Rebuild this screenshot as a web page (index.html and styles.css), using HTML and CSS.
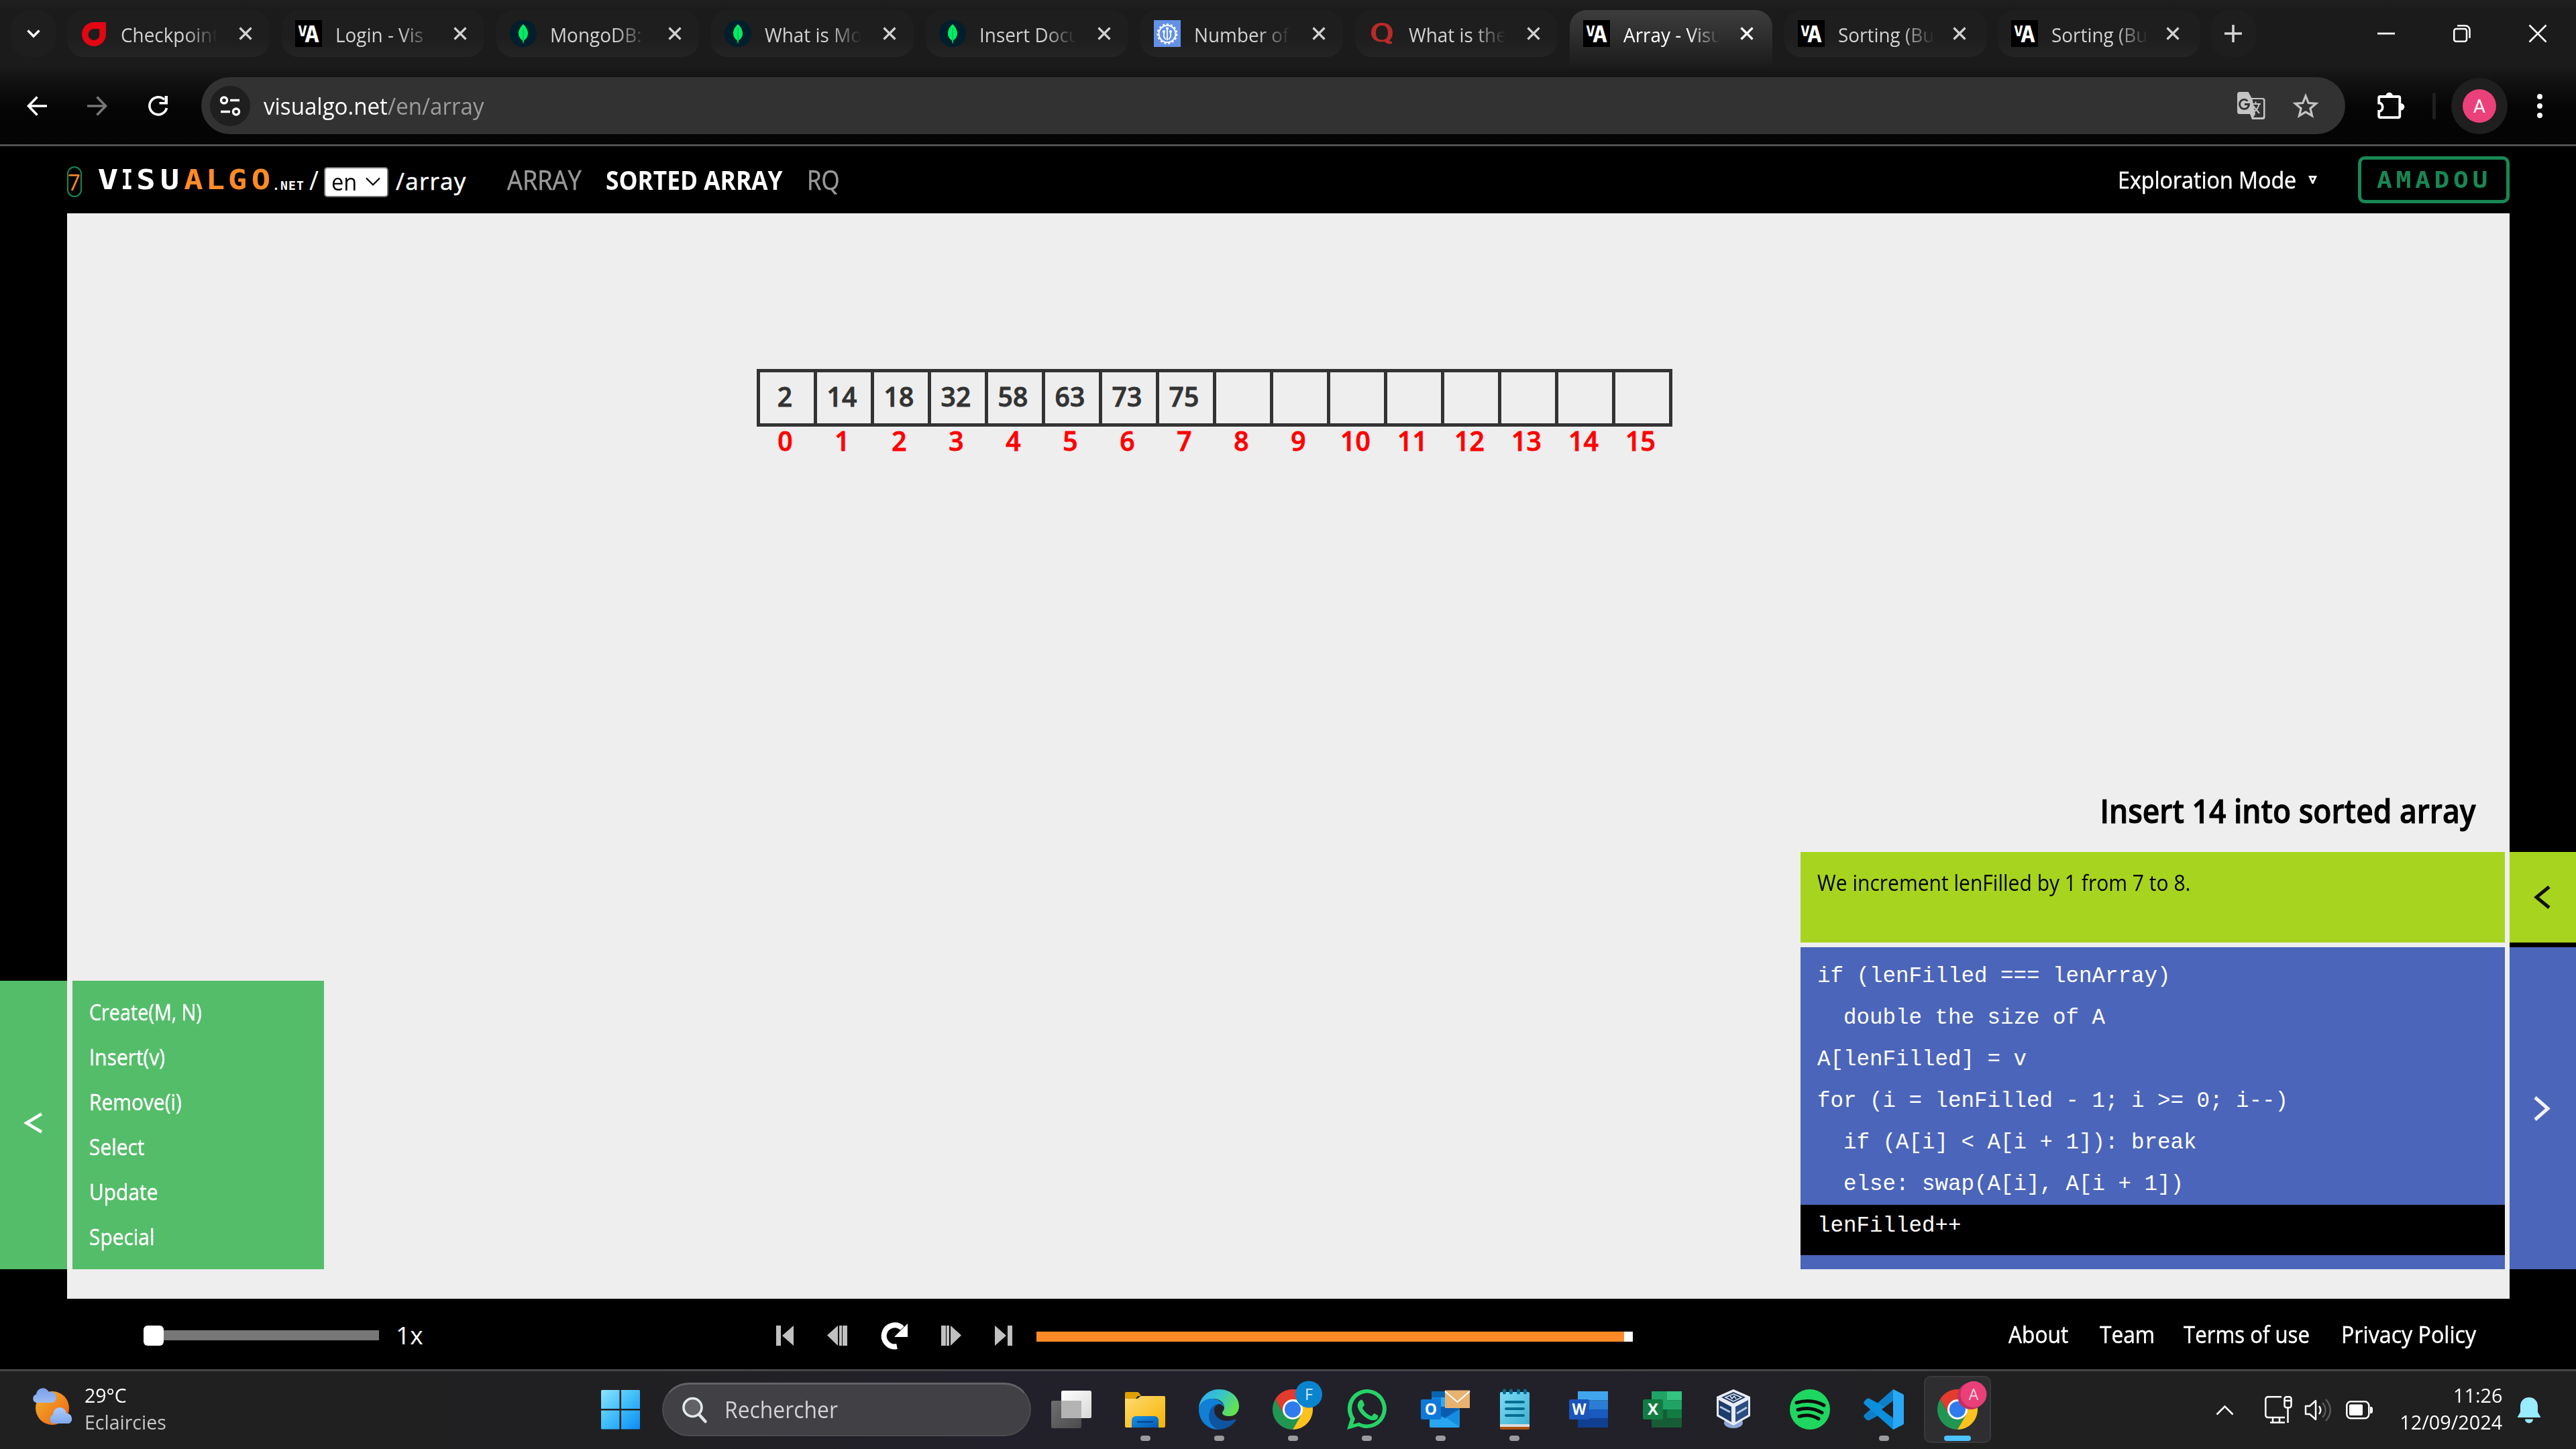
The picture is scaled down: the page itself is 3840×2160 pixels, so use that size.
FILE: index.html
```html
<!DOCTYPE html>
<html lang="en">
<head>
<meta charset="utf-8">
<title>Array - VisuAlgo</title>
<link rel="stylesheet" href="styles.css">
</head>
<body>
<svg class="defs" width="0" height="0">
  <defs>
    <linearGradient id="win" x1="0" y1="0" x2="1" y2="1"><stop offset="0" stop-color="#8ee2fd"/><stop offset=".5" stop-color="#3fbdf9"/><stop offset="1" stop-color="#0a8cf5"/></linearGradient>
    <linearGradient id="sun" x1="0" y1="0" x2="1" y2="1"><stop offset="0" stop-color="#f2b530"/><stop offset="1" stop-color="#ee5f10"/></linearGradient>
    <linearGradient id="cloud" x1="0" y1="0" x2="0" y2="1"><stop offset="0" stop-color="#7aa0e8"/><stop offset=".6" stop-color="#a9c8fa"/><stop offset="1" stop-color="#7ea8ee"/></linearGradient>
    <linearGradient id="folder" x1="0" y1="0" x2="1" y2="1"><stop offset="0" stop-color="#ffdc73"/><stop offset="1" stop-color="#f7b100"/></linearGradient>
    <linearGradient id="azure" x1="0" y1="0" x2="1" y2="1"><stop offset="0" stop-color="#1792e4"/><stop offset="1" stop-color="#0759b4"/></linearGradient>
    <linearGradient id="edgetop" x1="0" y1="0" x2="1" y2=".5"><stop offset="0" stop-color="#2fa9f0"/><stop offset=".5" stop-color="#35c4cf"/><stop offset="1" stop-color="#62e052"/></linearGradient>
    <linearGradient id="pad" x1="0" y1="0" x2="1" y2="1"><stop offset="0" stop-color="#7edcf6"/><stop offset="1" stop-color="#3fb0d2"/></linearGradient>
    <linearGradient id="sheet" x1="0" y1="0" x2="1" y2="1"><stop offset="0" stop-color="#ffffff"/><stop offset="1" stop-color="#d8d8d8"/></linearGradient>
    <linearGradient id="sheet2" x1="0" y1="0" x2="1" y2="1"><stop offset="0" stop-color="#6f6f72"/><stop offset="1" stop-color="#4b4b4d"/></linearGradient>
    <symbol id="leaf" viewBox="0 0 40 40"><circle cx="20" cy="20" r="20" fill="#001e2b"/><path d="M20 6c-5 5-7 9-7 14 0 5 3 8 6 10.500l.500 4h1l.500-4c3-2.500 6-5.500 6-10.500 0-5-2-9-7-14z" fill="#00ed64"/><path d="M20.200 12v19" stroke="#00a84a" stroke-width="1"/></symbol>
    <symbol id="va" viewBox="0 0 40 40"><rect width="40" height="40" fill="#000"/><text x="4" y="24" font-family="DejaVu Sans Mono" font-weight="700" font-size="22" textLength="14" lengthAdjust="spacingAndGlyphs" fill="#fff">V</text><text x="14" y="33" font-family="DejaVu Sans Mono" font-weight="700" font-size="34" textLength="22" lengthAdjust="spacingAndGlyphs" fill="#fff">A</text></symbol>
    <symbol id="x" viewBox="0 0 20 20"><path d="M1.500 1.500l17 17M18.500 1.500l-17 17" stroke="currentColor" stroke-width="3.200"/></symbol>
    <symbol id="chrome" viewBox="0 0 60 60"><path d="M4 15A30 30 0 0 1 56 15H30L17 37.500z" fill="#e33b2e"/><path d="M4 15A30 30 0 0 0 30 60L43 37.500H17z" fill="#219653"/><path d="M56 15A30 30 0 0 1 30 60L43 37.500 30 15z" fill="#fcc31e"/><circle cx="30" cy="30" r="15" fill="#fff"/><circle cx="30" cy="30" r="12" fill="#2f7bee"/></symbol>
  </defs>
</svg>

<div class="browser">
  <div class="tabstrip">
    <div class="tab-search"><svg width="22" height="14" viewBox="0 0 22 14"><path d="M2.500 2.500l8.500 8.500 8.500-8.500" fill="none" stroke="#fff" stroke-width="3.500"/></svg></div>
    <div class="tab"><svg class="fav" viewBox="0 0 40 40"><path fill-rule="evenodd" d="M38 3v17a18 18 0 1 1-18-17zM28 13h-8a8.500 8.500 0 1 0 8.500 8.500z" fill="#e30613"/></svg><div class="label"><span>Checkpoint</span></div><svg class="close"><use href="#x"/></svg></div>
    <div class="tab"><svg class="fav"><use href="#va"/></svg><div class="label"><span>Login - Vis</span></div><svg class="close"><use href="#x"/></svg></div>
    <div class="tab"><svg class="fav"><use href="#leaf"/></svg><div class="label"><span>MongoDB:</span></div><svg class="close"><use href="#x"/></svg></div>
    <div class="tab"><svg class="fav"><use href="#leaf"/></svg><div class="label"><span>What is Mo</span></div><svg class="close"><use href="#x"/></svg></div>
    <div class="tab"><svg class="fav"><use href="#leaf"/></svg><div class="label"><span>Insert Docu</span></div><svg class="close"><use href="#x"/></svg></div>
    <div class="tab"><svg class="fav" viewBox="0 0 40 40"><rect width="40" height="40" fill="#6391e6"/><circle cx="20" cy="20.500" r="12.500" fill="none" stroke="#fff" stroke-width="2"/><circle cx="20" cy="20.500" r="14.300" fill="none" stroke="#fff" stroke-width="2.400" stroke-dasharray="3 3"/><path d="M20 12v18M15 17v8l3 4M25 17v8l-3 4" stroke="#fff" stroke-width="1.800" fill="none"/><circle cx="20" cy="12.500" r="2" fill="#fff"/><circle cx="15" cy="17" r="2" fill="#fff"/><circle cx="25" cy="17" r="2" fill="#fff"/></svg><div class="label"><span>Number of</span></div><svg class="close"><use href="#x"/></svg></div>
    <div class="tab"><svg class="fav" viewBox="0 0 40 40"><path fill-rule="evenodd" d="M20 4c10 0 16 6 16 15 0 5-2 9-5 11.500 1 1.500 2 1.500 4 1.500v3c-5 1-9 0-11-3-12 2-20-4-20-13 0-9 6-15 16-15zM20 8c-6 0-9 4-9 11s3 10.500 9 10.500 9-4 9-10.500-3-11-9-11z" fill="#b92b27"/></svg><div class="label"><span>What is the</span></div><svg class="close"><use href="#x"/></svg></div>
    <div class="tab active"><svg class="fav"><use href="#va"/></svg><div class="label"><span>Array - Visu</span></div><svg class="close"><use href="#x"/></svg></div>
    <div class="tab after"><svg class="fav"><use href="#va"/></svg><div class="label"><span>Sorting (Bu</span></div><svg class="close"><use href="#x"/></svg></div>
    <div class="tab last"><svg class="fav"><use href="#va"/></svg><div class="label"><span>Sorting (Bu</span></div><svg class="close"><use href="#x"/></svg></div>
    <div class="new-tab"><svg width="26" height="26" viewBox="0 0 26 26"><path d="M13 0v26M0 13h26" stroke="#d6d6d6" stroke-width="3.500"/></svg></div>
    <div class="window-buttons">
      <svg width="26" height="26" viewBox="0 0 26 26"><path d="M0 13h26" stroke="#fff" stroke-width="2.800"/></svg>
      <svg width="26" height="26" viewBox="0 0 26 26"><rect x="1.250" y="6" width="18.750" height="18.750" rx="3" fill="none" stroke="#fff" stroke-width="2.500"/><path d="M6 1.250h12a6.500 6.500 0 0 1 6.500 6.500v12" fill="none" stroke="#fff" stroke-width="2.500"/></svg>
      <svg width="26" height="26" viewBox="0 0 26 26"><path d="M.500.500l25 25M25.500.500l-25 25" stroke="#fff" stroke-width="2.500"/></svg>
    </div>
  </div>
  <div class="toolbar">
    <div class="nav-buttons">
      <svg width="30" height="30" viewBox="0 0 30 30"><path d="M30 15H3M15.500 1.500L2.500 15l13 13.500" fill="none" stroke="#fff" stroke-width="3.600"/></svg>
      <svg width="30" height="30" viewBox="0 0 30 30"><path d="M0 15h27M14.500 1.500l13 13.500-13 13.500" fill="none" stroke="#777" stroke-width="3.600"/></svg>
      <svg width="32" height="30" viewBox="0 0 32 30"><path d="M25 5.500a13 13 0 1 0 3.500 12.500" fill="none" stroke="#fff" stroke-width="3.600"/><path d="M30 0v12.500H17.500v-3.600h8V0z" fill="#fff"/></svg>
    </div>
    <div class="omnibox">
      <div class="site-info"><svg width="32" height="30" viewBox="0 0 32 30" fill="none" stroke="#fff" stroke-width="3.400"><circle cx="7" cy="6.500" r="4.500"/><path d="M16 6.500h14M2 23.500h14"/><circle cx="25" cy="23.500" r="4.500"/></svg></div>
      <div class="url"><span>visualgo.net</span><span class="dim">/en/array</span></div>
      <svg class="translate" width="42" height="42" viewBox="0 0 42 42"><path d="M3.500 0h13l5 9H38a3.500 3.500 0 0 1 3.500 3.500V37.500A3.500 3.500 0 0 1 38 41H22l-3-8H3.500A3.500 3.500 0 0 1 0 29.500v-26A3.500 3.500 0 0 1 3.500 0z" fill="#c4c4c4"/><path d="M22.500 11H37a2 2 0 0 1 2 2v23a2 2 0 0 1-2 2H24l3-5z" fill="#323232"/><path d="M22 18h13M27.500 14.500V18M24 21l9 11M32.500 18c-1 6-4 9.500-8 12" stroke="#c4c4c4" stroke-width="2" fill="none"/><path d="M15.500 13.500A7 7 0 1 0 17.500 18.500h-6.500" fill="none" stroke="#323232" stroke-width="2.800"/></svg>
      <svg width="40" height="37" viewBox="0 0 40 37"><path d="M20 4l4.200 10.500 11.300.900-8.600 7.300 2.700 11L20 27.800l-9.600 5.900 2.700-11L4.500 15.400l11.300-.900z" fill="none" stroke="#c4c4c4" stroke-width="3.200"/></svg>
    </div>
    <svg class="puzzle" width="41" height="41" viewBox="0 0 41 41"><path d="M4 7h27.500a1.800 1.800 0 0 1 1.800 1.800v27.500a1.800 1.800 0 0 1-1.800 1.800H4a1.800 1.800 0 0 1-1.800-1.800V29c3 0 5.500-2.500 5.500-6.500S5 16.500 2.200 16.500V8.800A1.800 1.800 0 0 1 4 7z" fill="none" stroke="#fff" stroke-width="3.800"/><path d="M12.500 6a5.200 5.200 0 0 1 10.400 0zM35 17a5.300 5.300 0 0 1 0 10.600z" fill="#fff"/></svg>
    <div class="separator"></div>
    <div class="profile"><div class="avatar">A</div></div>
    <svg class="kebab" width="8" height="36" viewBox="0 0 8 36" fill="#fff"><circle cx="4" cy="4" r="4"/><circle cx="4" cy="18" r="4"/><circle cx="4" cy="32" r="4"/></svg>
  </div>
</div>

<header class="site-header">
  <div class="seven">7</div>
  <div class="logo"><i class="v">V</i><i class="i">I</i><i class="s">S</i><i class="u">U</i><i class="a">A</i><i class="l">L</i><i class="g">G</i><i class="o">O</i></div>
  <div class="net">.NET</div>
  <div class="slash">/</div>
  <div class="lang"><span>en</span><svg width="22" height="13" viewBox="0 0 22 13"><path d="M1 1.500l10 10 10-10" fill="none" stroke="#000" stroke-width="2.200"/></svg></div>
  <div class="path">/array</div>
  <nav class="modes"><a class="m1"><span>ARRAY</span></a><a class="m2"><span>SORTED ARRAY</span></a><a class="m3"><span>RQ</span></a></nav>
  <div class="exploration"><span>Exploration Mode</span></div>
  <svg class="caret" width="13" height="12" viewBox="0 0 13 12"><path fill-rule="evenodd" d="M0 0h13L7.500 12h-2zM4.300 3l2.200 4.500L8.700 3z" fill="#fff"/></svg>
  <div class="user"><span>AMADOU</span></div>
</header>

<main class="app">
  <div class="edge left"><div class="handle green"><svg width="28" height="32" viewBox="0 0 28 32"><path d="M26 2.500L3.500 16 26 29.500" fill="none" stroke="#fff" stroke-width="4.600"/></svg></div></div>
  <section class="stage">
    <div class="array">
      <div class="cells"><b>2</b><b>14</b><b>18</b><b>32</b><b>58</b><b>63</b><b>73</b><b>75</b><b></b><b></b><b></b><b></b><b></b><b></b><b></b><b></b></div>
      <div class="indices"><b>0</b><b>1</b><b>2</b><b>3</b><b>4</b><b>5</b><b>6</b><b>7</b><b>8</b><b>9</b><b>10</b><b>11</b><b>12</b><b>13</b><b>14</b><b>15</b></div>
    </div>
    <div class="panels">
      <ul class="actions"><li><span class="create">Create(M, N)</span></li><li><span>Insert(v)</span></li><li><span>Remove(i)</span></li><li><span>Select</span></li><li><span>Update</span></li><li><span>Special</span></li></ul>
      <div class="trace">
        <h1><span>Insert 14 into sorted array</span></h1>
        <div class="status"><span>We increment lenFilled by 1 from 7 to 8.</span></div>
        <div class="code"><p>if (lenFilled === lenArray)</p><p>  double the size of A</p><p>A[lenFilled] = v</p><p>for (i = lenFilled - 1; i &gt;= 0; i--)</p><p>  if (A[i] &lt; A[i + 1]): break</p><p>  else: swap(A[i], A[i + 1])</p><p class="current">lenFilled++</p></div>
      </div>
    </div>
  </section>
  <div class="edge right">
    <div class="handle lime"><svg width="25" height="35" viewBox="0 0 25 35"><path d="M23 2L4 17.500 23 33" fill="none" stroke="#111" stroke-width="5"/></svg></div>
    <div class="handle blue"><svg width="25" height="37" viewBox="0 0 25 37"><path d="M2 2l19 16.500L2 35" fill="none" stroke="#f4f4f8" stroke-width="5"/></svg></div>
  </div>
</main>

<footer class="player">
  <div class="slider"><div class="thumb"></div></div>
  <div class="speed">1x</div>
  <div class="controls">
    <svg class="c1" width="26" height="30" viewBox="0 0 26 30"><path d="M0 0h7v30H0zM26 0v30L9 15z" fill="#c0c0c0"/></svg>
    <svg class="c2" width="30" height="30" viewBox="0 0 30 30"><path d="M16 0v30L0 14.500zM18 0h4v30h-4zM23 0h7v30h-7z" fill="#c0c0c0"/></svg>
    <svg class="c3" width="40" height="40" viewBox="0 0 40 40"><path d="M32 9A16 16 0 1 0 24 36" fill="none" stroke="#fff" stroke-width="8"/><path d="M40 2v20H20z" fill="#fff"/></svg>
    <svg class="c4" width="30" height="30" viewBox="0 0 30 30"><path d="M14 0v30l16-15.500zM8 0h4v30H8zM0 0h7v30H0z" fill="#c0c0c0"/></svg>
    <svg class="c5" width="26" height="30" viewBox="0 0 26 30"><path d="M26 0h-7v30h7zM0 0v30l17-15z" fill="#c0c0c0"/></svg>
  </div>
  <div class="progress"></div>
  <nav class="links"><a class="k1"><span>About</span></a><a class="k2"><span>Team</span></a><a class="k3"><span>Terms of use</span></a><a class="k4"><span>Privacy Policy</span></a></nav>
</footer>

<div class="taskbar">
  <div class="weather">
    <svg width="62" height="56" viewBox="0 0 62 56"><ellipse cx="30" cy="30" rx="25" ry="25" fill="url(#sun)"/><path d="M6 22a6.500 6.500 0 0 1 0-12.500A10 10 0 0 1 25 6a8 8 0 0 1 5 16zM31 53a7 7 0 0 1 0-13 10 10 0 0 1 20-2 8 8 0 0 1 4 15z" fill="url(#cloud)"/></svg>
    <div class="weather-text"><span>29°C</span><span class="sky">Eclaircies</span></div>
  </div>
  <div class="slot"><svg viewBox="0 0 60 60"><path d="M1 2.500A1.500 1.500 0 0 1 2.500 1H28.500v28H1zM31 1h26.500A1.500 1.500 0 0 1 59 2.500V29H31zM1 31.500h27.500v28h-26A1.500 1.500 0 0 1 1 58zM31 31.500h28V58a1.500 1.500 0 0 1-1.500 1.500H31z" fill="url(#win)"/></svg></div>
  <div class="search"><svg width="38" height="40" viewBox="0 0 38 40"><circle cx="15.500" cy="16" r="13.500" fill="#626266" stroke="#e4e9ec" stroke-width="3.600"/><path d="M25 26.500l9.500 10.500" stroke="#dfe3e6" stroke-width="4.600" stroke-linecap="round"/></svg><span>Rechercher</span></div>
  <div class="slot first"><svg viewBox="0 0 60 60"><rect x="15" y="2" width="45" height="41" rx="2.500" fill="url(#sheet)"/><rect x="0" y="17" width="45" height="41" rx="2.500" fill="url(#sheet2)"/><path d="M15 17h30v26H15z" fill="#b4b4b4"/></svg></div>
  <div class="slot run"><svg viewBox="0 0 60 60"><path d="M0 6a2 2 0 0 1 2-2h16c3 0 4 3 6 6h-5l-4 5H0z" fill="#dfa000"/><path d="M0 14h17c4 0 4-4 8-4h33a2 2 0 0 1 2 2v43a2 2 0 0 1-2 2H2a2 2 0 0 1-2-2z" fill="url(#folder)"/><path d="M10 57V46a6 6 0 0 1 6-6h28a6 6 0 0 1 6 6v11z" fill="url(#azure)"/><path d="M18 48.500h24" stroke="#06468f" stroke-width="2.500"/></svg></div>
  <div class="slot run"><svg viewBox="0 0 60 60"><path d="M0 29C1 12 14 0 30 0c17 0 30 11 30 25 0 9-6 15-14 15-7 0-11-2-11-5 0-2 3-3 3-8C38 20 31 14 22 14 11 14 2 20 0 29z" fill="url(#edgetop)"/><path d="M0 30C1 20 9 14 19 14c12 0 19 8 19 13-2-3-5-5-8-5-6 0-9 5-9 12 0 12 9 20 21 21-4 3-8 5-13 5C13 60 0 47 0 30z" fill="#117fd6"/><path d="M30 22c-9 0-15 9-15 18 0 10 6 17 14 20 11 0 20-5 26-13 1-1 0-3-2-2-14 5-30 0-30-14 0-4 2-7 7-9z" fill="#0f549f"/></svg></div>
  <div class="slot run"><svg viewBox="0 0 60 60"><use href="#chrome" width="60" height="60"/><circle cx="54" cy="7.500" r="20" fill="#0a84cf"/><text x="54" y="16" font-family="Open Sans" font-size="23" text-anchor="middle" fill="#d5ecfa">F</text></svg></div>
  <div class="slot run"><svg viewBox="0 0 60 60"><path fill-rule="evenodd" d="M31 0a29 29 0 1 1-14 55L0 60l5-16A29 29 0 0 1 31 0zM31 5.500A23.500 23.500 0 0 0 11 42l1 2-3 8 9-2.500 2 1A23.500 23.500 0 1 0 31 5.500z" fill="#25d366"/><path d="M20 16c2-1 3 0 4 2l2 5c0 2-3 3-3 5 3 6 7 9 13 12 2 0 3-4 5-4l5 3c1 1 0 3-1 5-3 3-8 3-14 0-7-4-13-10-15-17-1-5 1-9 4-11z" fill="#25d366"/></svg></div>
  <div class="slot run"><svg viewBox="0 0 60 60"><path d="M16 3h42v40H16z" fill="#0a65b0"/><path d="M16 12h14v16H16z" fill="#0f83dc"/><path d="M30 12h14v14H30z" fill="#38a9ea"/><path d="M28 26h26l-16 17-10-7z" fill="#0b5cae"/><path d="M13 35l24 8 21-13v25a2 2 0 0 1-2 2H15a2 2 0 0 1-2-2z" fill="#28a5ee"/><path d="M58 30v26L37 42z" fill="#168de2"/><rect x="0" y="15" width="30" height="30" rx="2.500" fill="#0f78d8"/><text x="15" y="38" font-family="Open Sans" font-weight="700" font-size="23" text-anchor="middle" fill="#fff">O</text><path d="M36 1.500h37V28H36z" fill="#e8b270"/><path d="M36 3l18.500 16L73 3" fill="none" stroke="#fff" stroke-width="2"/></svg></div>
  <div class="slot run"><svg viewBox="0 0 60 60"><path d="M8 50h44v8a2 2 0 0 1-2 2H10a2 2 0 0 1-2-2z" fill="#a9500f"/><path d="M8 48h44v8H8z" fill="#dcdcdc"/><path d="M10 4h40a2 2 0 0 1 2 2v46H8V6a2 2 0 0 1 2-2z" fill="url(#pad)"/><path d="M17 19h26M17 29h26M17 39h26" stroke="#066e92" stroke-width="4" stroke-linecap="round"/><path d="M14.500 2v3M24.500 2v3M35.500 2v3M45.500 2v3" stroke="#066e92" stroke-width="5" stroke-linecap="round"/></svg></div>
  <div class="slot"><svg viewBox="0 0 60 60"><path d="M14 3h45v13.500H14z" fill="#41a5ee"/><path d="M14 16.500h45V30H14z" fill="#2b7cd3"/><path d="M14 30h45v13.500H14z" fill="#185abd"/><path d="M14 43.500h45V57H14z" fill="#103f91"/><rect x="1" y="15" width="30" height="30" rx="2.500" fill="#1b55b8"/><text x="16" y="38" font-family="Open Sans" font-weight="700" font-size="23" text-anchor="middle" textLength="21" lengthAdjust="spacingAndGlyphs" fill="#fff">W</text></svg></div>
  <div class="slot"><svg viewBox="0 0 60 60"><path d="M14 3h23v27H14z" fill="#21a366"/><path d="M37 3h22v13.500H37z" fill="#33c481"/><path d="M37 16.500h22V30H37z" fill="#21a366"/><path d="M14 30h23v27H14z" fill="#185c37"/><path d="M37 30h22v13.500H37z" fill="#107c41"/><path d="M37 43.500h22V57H37z" fill="#185c37"/><rect x="1" y="15" width="30" height="30" rx="2.500" fill="#107c41"/><text x="16" y="38" font-family="Open Sans" font-weight="700" font-size="24" text-anchor="middle" fill="#fff">X</text></svg></div>
  <div class="slot"><svg viewBox="4 0 60 60"><ellipse cx="30" cy="50" rx="14" ry="8" fill="#8fa7d8"/><path d="M30 0l25 11v29L30 54 5 40V11z" fill="#e8ecf6"/><path d="M30 4l18 8-18 9-18-9z" fill="#1d3760"/><path d="M30 7l12 5-12 6-12-6z" fill="none" stroke="#dfe6f2" stroke-width="1.500"/><path d="M25 10l3 4 3-4 3 4" fill="none" stroke="#dfe6f2" stroke-width="1.500"/><path d="M8 16l19 10v23L8 38z" fill="#1e3d6b"/><path d="M33 26l19-10v22L33 49z" fill="#2b4c80"/><path d="M10 26l15 8M35 36l15-9" stroke="#b9c8e2" stroke-width="3"/></svg></div>
  <div class="slot spotify"><svg viewBox="0 0 60 60"><circle cx="30" cy="30" r="30" fill="#1ed760"/><path d="M10 20c14-4 29-3 41 4M12 30.500c12-3.500 25-2 36 4.500M14 40.500c10-3 20-2 29 3.500" fill="none" stroke="#0c0c0c" stroke-width="5" stroke-linecap="round"/></svg></div>
  <div class="slot run"><svg viewBox="0 0 60 60"><path d="M44 0l14 7a3 3 0 0 1 2 3v9L9 46c-1 1-3 0-4 0l-4-4c-1-1-1-3 0-4z" fill="#0f7fc8"/><path d="M44 60l14-7a3 3 0 0 0 2-3v-9L9 14c-1-1-3 0-4 0l-4 4c-1 1-1 3 0 4z" fill="#0c8fdc"/><path d="M44 0l14 7a3 3 0 0 1 2 3v40a3 3 0 0 1-2 3l-14 7z" fill="#2aa8f5"/><path d="M44 17v26L27 30z" fill="#202024"/></svg></div>
  <div class="slot run current"><svg viewBox="0 0 60 60"><use href="#chrome" width="60" height="60"/><circle cx="50" cy="10" r="20" fill="#c42f62"/><circle cx="54" cy="7.500" r="19.500" fill="#ea3f79"/><text x="54" y="16" font-family="Open Sans" font-size="23" text-anchor="middle" fill="#fbd3e0">A</text></svg></div>
  <div class="tray">
    <svg class="t1" width="27" height="16" viewBox="0 0 27 16"><path d="M1.500 14.500l12-12 12 12" fill="none" stroke="#fff" stroke-width="2.600"/></svg>
    <svg class="t2" width="41" height="41" viewBox="0 0 41 41" fill="none" stroke="#fff" stroke-width="2.500"><path d="M25 1.300H5A3.700 3.700 0 0 0 1.300 5v23A3.700 3.700 0 0 0 5 32h25M12 32v7M22 32v7M8 39.500h22M34.500 18v22"/><rect x="29.500" y="1.300" width="10" height="16" rx="3"/><path d="M29.500 7h10"/></svg>
    <svg class="t3" width="42" height="36" viewBox="0 0 42 36" fill="none" stroke-width="2.500"><path d="M2 12h6l9-8v28l-9-8H2z" stroke="#fff" stroke-linejoin="round"/><path d="M22 12c3 4 3 8 0 12" stroke="#fff"/><path d="M27 7c6 7 6 15 0 22M32 2c9 10 9 22 0 32" stroke="#5a5a5a"/></svg>
    <svg class="t4" width="41" height="28" viewBox="0 0 41 28"><rect x="1.300" y="1.300" width="33" height="25" rx="6" fill="none" stroke="#fff" stroke-width="2.500"/><rect x="5" y="5.500" width="20" height="16.500" rx="2" fill="#fff"/><path d="M36 9h1a3 3 0 0 1 3 3v4a3 3 0 0 1-3 3h-1z" fill="#fff"/></svg>
    <div class="clock"><span>11:26</span><span>12/09/2024</span></div>
    <svg class="t5" width="34" height="38" viewBox="0 0 34 38"><path d="M17 0c8 0 13 6 13 13v9l4 7v1H0v-1l4-7v-9C4 6 9 0 17 0zM11 32.500h12a6 6 0 0 1-12 0z" fill="#99ebff"/></svg>
  </div>
</div>
</body>
</html>
```

FILE: styles.css
```css
* { box-sizing: border-box; }
body { margin: 0; width: 3840px; height: 2160px; overflow: hidden; background: #000; color: #fff; font-family: "Open Sans", "Noto Sans", sans-serif; display: flex; flex-direction: column; white-space: nowrap; }
svg { display: block; flex: none; overflow: visible; }
.defs { position: absolute; }
span { display: inline-block; transform-origin: 0 50%; }

/* Browser frame */
.browser { height: 218px; flex: none; border-bottom: 3px solid #505050; background: linear-gradient(#1f1f1f 0, #1b1b1b 16px, #1b1b1b 98px, #121212 120px, #050505 160px, #040404 215px); }
.tabstrip { height: 115px; display: flex; align-items: flex-start; padding: 15px 0 0 16px; }
.tab-search, .new-tab { width: 68px; height: 70px; border-radius: 28px; background: #1e1e1e; display: flex; align-items: center; justify-content: center; }
.tab { width: 302px; height: 70px; margin-right: 18px; padding: 0 20px; border-radius: 25px; background: linear-gradient(#1e1e1e 60%, #242424); display: flex; align-items: center; font-size: 30px; color: #d2d2d2; }
.tab-search + .tab { margin-left: 16px; }
.fav { width: 40px; height: 40px; margin-right: 20px; }
.label { width: 150px; overflow: hidden; padding-top: 2px; -webkit-mask-image: linear-gradient(90deg, #000 96px, transparent 144px); mask-image: linear-gradient(90deg, #000 96px, transparent 144px); }
.label span { transform: scaleX(.93); }
.close { width: 20px; height: 20px; margin-left: auto; margin-right: 6px; }
.tab.active { height: 85px; padding-bottom: 15px; border-radius: 25px 25px 0 0; background: linear-gradient(#3d3d3d, #2b2b2b 55%, #1b1b1b); color: #fff; }
.tab.active .close { margin-right: 8px; }
.tab.after, .tab.last { margin-right: 16px; }
.tab.after .close, .tab.last .close { margin-right: 11px; }
.new-tab { margin-left: -1px; }
.window-buttons { display: flex; gap: 87px; margin: 22px 44px 0 auto; }
.toolbar { height: 85px; display: flex; align-items: center; }
.nav-buttons { width: 300px; display: flex; gap: 60px; padding-left: 40px; }
.omnibox { width: 3196px; height: 85px; border-radius: 43px; background: #323232; display: flex; align-items: center; padding: 0 39px 0 13px; }
.site-info { width: 60px; height: 60px; border-radius: 50%; background: #1f1f1f; display: flex; align-items: center; justify-content: center; }
.url { display: flex; margin: -1px 0 0 20px; font-size: 35px; flex: 1; }
.url span { transform: scaleX(.945); width: 185px; }
.url .dim { color: #9c9c9c; }
.translate { margin-right: 40px; }
.puzzle { margin-left: 48px; }
.separator { width: 5px; height: 40px; margin-left: 41px; border-radius: 2px; background: #1f1f1f; }
.profile { width: 84px; height: 84px; margin-left: 23px; border-radius: 50%; background: #1f1f1f; display: flex; align-items: center; justify-content: center; }
.avatar { width: 50px; height: 50px; border-radius: 50%; background: #ec407a; text-align: center; font: 28px/52px Roboto, sans-serif; }
.kebab { margin-left: 44px; }

/* Site header */
.site-header { height: 100px; flex: none; display: flex; align-items: center; padding: 0 99px 0 100px; font-size: 35px; }
.path, .modes .m1, .modes .m3, .exploration, .links, .actions { -webkit-text-stroke: .500px currentColor; }
.seven { width: 22px; height: 46px; margin-top: 6px; border: 2px solid #198754; border-radius: 11px; color: #ff8a27; font: 33px/43px "Open Sans", sans-serif; text-align: center; text-indent: -1px; }
.logo { display: flex; margin-left: 21px; font: 700 41px/60px "DejaVu Sans Mono", monospace; }
.logo i { font-style: normal; display: flex; justify-content: center; width: 36px; transform: scaleX(1.15); }
.logo .i { width: 21px; transform: scaleX(.7); }
.logo .v { transform: scaleX(1.25); }
.logo .s, .logo .a { width: 35px; }
.logo .l { width: 30px; }
.logo .o { width: 34px; }
.logo .a, .logo .l, .logo .g, .logo .o { color: #ff8a27; }
.net { width: 55px; padding-top: 18px; font: 700 18px/24px "DejaVu Sans Mono", monospace; letter-spacing: 1.200px; }
.slash { width: 22px; font-size: 38px; }
.lang { width: 96px; height: 45px; margin-top: 6px; border: 2px solid #767676; border-radius: 5px; background: #fff; color: #000; display: flex; align-items: center; justify-content: space-between; padding: 0 10px 2px 9px; }
.lang span { transform: scaleX(.93); }
.path { margin: 3px 0 0 11px; width: 166px; letter-spacing: 1.300px; }
.modes { display: flex; font-size: 40px; color: #999; flex: 1; margin-top: -1px; }
.modes .m1 { width: 147px; }
.modes .m1 span { transform: scaleX(.905); }
.modes .m3 span { transform: scaleX(.87); }
.modes .m2 { width: 300px; color: #fff; font-weight: 700; }
.modes .m2 span { transform: scaleX(.882); }
.exploration { width: 284px; margin-top: -1px; }
.exploration span { transform: scaleX(.92); }
.user { width: 226px; height: 70px; margin-left: 61px; border: 5px solid #198754; border-radius: 10px; color: #198754; font: 700 33px/61px "DejaVu Sans Mono", monospace; padding-left: 23px; }
.user span { letter-spacing: 4.900px; transform: scaleX(1.15); }

/* Visualisation area */
.app { height: 1618px; flex: none; display: flex; }
.edge { width: 100px; display: flex; flex-direction: column; justify-content: flex-end; gap: 7px; padding-bottom: 44px; }
.edge.right { width: 99px; }
.handle { display: flex; align-items: center; justify-content: center; }
.handle.green { height: 430px; background: #54bd69; padding-bottom: 6px; }
.handle.lime { height: 135px; background: #a7d41e; padding-right: 3px; }
.handle.blue { height: 480px; background: #4b65ba; padding-right: 3px; }
.stage { width: 3641px; background: #eee; color: #000; display: flex; flex-direction: column; padding: 232px 7px 44px 8px; }
.array { margin-left: 1020px; font-size: 39px; }
.array b { font-weight: 600; letter-spacing: .300px; -webkit-text-stroke: .900px currentColor; }
.cells, .indices { display: flex; }
.cells b { width: 90px; height: 86px; margin-right: -5px; border: 5px solid #333; color: #333; line-height: 72px; text-align: center; padding-right: 6px; flex: none; }
.indices b { width: 85px; color: #f00; line-height: 41px; text-align: center; flex: none; }
.panels { margin-top: auto; display: flex; justify-content: space-between; align-items: flex-end; font-size: 32.500px; }
.actions { width: 375px; height: 430px; margin: 0; padding: 13px 25px; list-style: none; background: #54bd69; color: #fff; line-height: 67px; }
.actions span { transform: scaleX(.92); }
.actions .create { transform: scaleX(.885); }
.trace { width: 1050px; }
.trace h1 { margin: 0 43px 26px 0; font-size: 48px; font-weight: 600; line-height: 70px; text-align: right; -webkit-text-stroke: 1px currentColor; }
.trace h1 span { transform: scaleX(.925); transform-origin: 100% 50%; }
.status { height: 135px; margin-bottom: 7px; padding: 15px 25px; background: #a7d41e; line-height: 62px; }
.status span { transform: scaleX(.924); }
.code { height: 480px; padding-top: 12px; background: #4b65ba; color: #fff; font: 32.500px/62px "Liberation Mono", monospace; }
.code p { margin: 0; height: 62px; padding: 1px 0 0 25px; white-space: pre; }
.code .current { height: 75px; background: #000; }

/* Player bar */
.player { height: 105px; flex: none; display: flex; align-items: center; padding-top: 4px; }
.slider { width: 351px; height: 15px; margin-left: 214px; background: #777; display: flex; align-items: center; }
.thumb { width: 30px; height: 30px; border-radius: 6px; background: #fff; }
.speed { margin: -3px 0 0 25px; width: 567px; font-size: 37px; }
.controls { display: flex; align-items: center; padding-top: 1px; }
.c2, .c3, .c4, .c5 { margin-left: 50px; }
.progress { width: 889px; height: 15px; margin-left: 36px; border-right: 13px solid #fff; background: #ff8a27; margin-top: 4px; }
.links { display: flex; margin: -4px 0 0 560px; font-size: 35px; }
.links span { transform: scaleX(.905); }
.k1 { width: 136px; }
.k2 { width: 125px; }
.k3 { width: 235px; }
.links .k3 span { transform: scaleX(.89); }
.links .k4 span { transform: scaleX(.92); }

/* Windows taskbar */
.taskbar { height: 119px; flex: none; display: flex; border-top: 3px solid #454547; background: linear-gradient(90deg, #202020, #202022 25%, #22212b 38%, #22212a 62%, #202020 78%, #202020); }
.weather { width: 870px; flex: none; display: flex; padding: 25px 0 0 48px; }
.weather-text { margin: -9px 0 0 16px; display: flex; flex-direction: column; font-size: 30px; line-height: 40px; align-items: flex-start; }
.weather-text span { transform: scaleX(.95); }
.weather-text .sky { color: #c6c6c6; }
.slot { width: 110.100px; height: 112px; display: flex; flex-direction: column; align-items: center; padding-top: 27px; flex: none; }
.slot > svg { width: 60px; height: 60px; }
.run::after { content: ""; width: 15px; height: 8px; border-radius: 4px; background: #9b9a9f; margin-top: 9px; }
.search { width: 550px; height: 80px; flex: none; margin: 17px 0 0 7px; border: 2px solid #4c4c50; border-top: 3px solid #626267; border-radius: 40px; background: #404045; display: flex; align-items: center; padding-left: 28px; color: #d2d2d4; font-size: 35px; }
.search span { margin: -3px 0 0 25px; transform: scaleX(.91); }
.slot.first { margin-left: 5px; }
.run.current { width: 100px; height: 100px; margin: 7px 0 0 5px; padding-top: 18px; border: 2px solid #3a3a3d; border-radius: 10px; background: #2e2e31; }
.run.current::after { width: 40px; background: #4cc2ff; }
.tray { display: flex; align-items: center; margin-left: auto; padding: 1px 53px 2px 0; }
.t2 { margin-left: 46px; }
.t3 { margin-left: 18px; }
.t4 { margin-left: 20px; }
.clock { width: 192px; display: flex; flex-direction: column; align-items: flex-end; font-size: 30px; line-height: 40px; margin-right: 23px; margin-top: -3px; }
.clock span { transform: scaleX(.96); transform-origin: 100% 50%; }
```
